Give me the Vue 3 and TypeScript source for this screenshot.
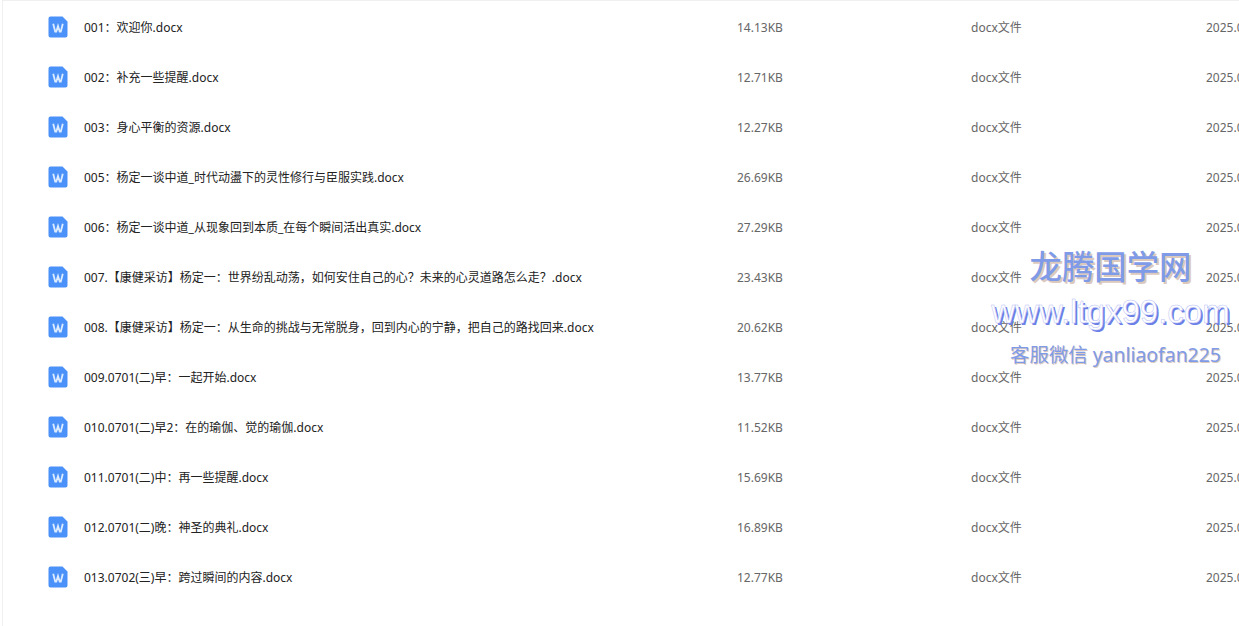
<script setup lang="ts">
type FileRow = {
  name: string
  size: string
}

// full-width punctuation written as escapes
const COLON = '\uFF1A'
const COMMA = '\uFF0C'
const QMARK = '\uFF1F'

const files: FileRow[] = [
  { name: `001${COLON}欢迎你.docx`, size: '14.13KB' },
  { name: `002${COLON}补充一些提醒.docx`, size: '12.71KB' },
  { name: `003${COLON}身心平衡的资源.docx`, size: '12.27KB' },
  { name: `005${COLON}杨定一谈中道_时代动盪下的灵性修行与臣服实践.docx`, size: '26.69KB' },
  { name: `006${COLON}杨定一谈中道_从现象回到本质_在每个瞬间活出真实.docx`, size: '27.29KB' },
  { name: `007.【康健采访】杨定一${COLON}世界纷乱动荡${COMMA}如何安住自己的心${QMARK}未来的心灵道路怎么走${QMARK}.docx`, size: '23.43KB' },
  { name: `008.【康健采访】杨定一${COLON}从生命的挑战与无常脱身${COMMA}回到内心的宁静${COMMA}把自己的路找回来.docx`, size: '20.62KB' },
  { name: `009.0701(二)早${COLON}一起开始.docx`, size: '13.77KB' },
  { name: `010.0701(二)早2${COLON}在的瑜伽、觉的瑜伽.docx`, size: '11.52KB' },
  { name: `011.0701(二)中${COLON}再一些提醒.docx`, size: '15.69KB' },
  { name: `012.0701(二)晚${COLON}神圣的典礼.docx`, size: '16.89KB' },
  { name: `013.0702(三)早${COLON}跨过瞬间的内容.docx`, size: '12.77KB' },
]
</script>

<template>
  <div class="page">
    <div class="list">
      <div v-for="file in files" :key="file.name" class="row">
        <div class="cell-name">
          <svg class="doc-icon" width="20" height="22" viewBox="0 0 20 22">
            <path d="M2.5 0.5H14.5L19.5 5.5V19.5a2 2 0 0 1-2 2H2.5a2 2 0 0 1-2-2V2.5a2 2 0 0 1 2-2Z" fill="#4a92fa" />
            <path d="M5.2 7.8L7.2 15.6H8.3L10 10L11.7 15.6H12.8L14.8 7.8" fill="none" stroke="#dcebff" stroke-width="1.8" />
          </svg>
          <span class="name">{{ file.name }}</span>
        </div>
        <div class="cell-size">{{ file.size }}</div>
        <div class="cell-type">docx文件</div>
        <div class="cell-date">2025.07.01</div>
      </div>
    </div>
    <div class="watermark">
      <div class="wm-title">龙腾国学网</div>
      <div class="wm-url">www.ltgx99.com</div>
      <div class="wm-contact">客服微信 yanliaofan225</div>
    </div>
  </div>
</template>

<style scoped>
.page {
  position: relative;
  width: 1239px;
  height: 626px;
  overflow: hidden;
  background: #fff;
  font-family: "Noto Sans", "Noto Sans CJK SC", sans-serif;
}

.list {
  box-sizing: border-box;
  height: 626px;
  margin-left: 2px;
  padding-top: 1px;
  border-left: 1px solid #f0f0f0;
  border-top: 1px solid #f0f0f0;
}

.row {
  display: flex;
  align-items: center;
  height: 50px;
  font-size: 12px;
  color: #666;
  white-space: nowrap;
}

.cell-name {
  display: flex;
  align-items: center;
  width: 734px;
  flex: none;
  padding-left: 45px;
  box-sizing: border-box;
}

.doc-icon {
  flex: none;
  margin-right: 16px;
}

.name {
  color: #222;
}

.cell-size {
  width: 234px;
  flex: none;
}

.cell-type {
  width: 235px;
  flex: none;
}

.watermark {
  position: absolute;
  top: 243px;
  left: 986px;
  width: 249px;
  display: flex;
  flex-direction: column;
  align-items: center;
  pointer-events: none;
}

.wm-title {
  font-size: 32.4px;
  line-height: 46px;
  font-weight: 500;
  color: #7f9be8;
  text-shadow: 2px 2px 0 #dcc9bd;
}

.wm-url {
  margin-top: 3px;
  font-family: "Liberation Sans", sans-serif;
  font-size: 33px;
  line-height: 40px;
  color: #fff;
  -webkit-text-stroke: 0.5px #b9c2f6;
  text-shadow: 2px 2px 0 #6b7fe6;
}

.wm-contact {
  margin-top: 9px;
  margin-left: 10px;
  font-size: 19.4px;
  line-height: 28px;
  font-weight: 400;
  color: #7f9be8;
  text-shadow: 1px 1px 0 #dcc9bd;
}
</style>
